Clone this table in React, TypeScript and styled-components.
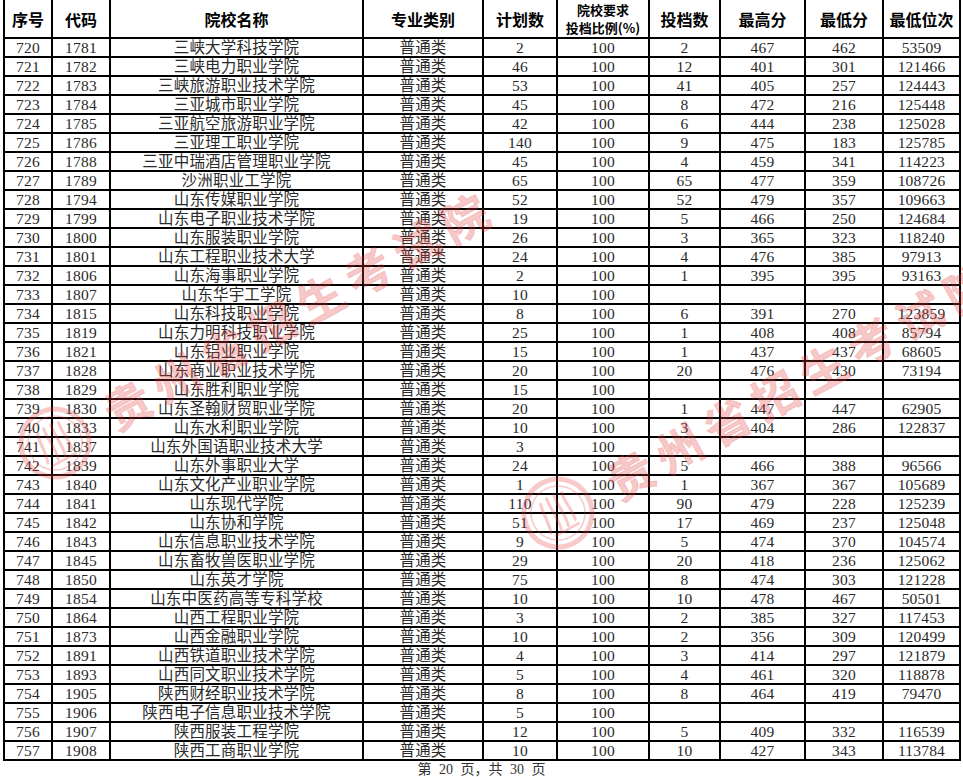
import styled, { createGlobalStyle } from "styled-components";

const GlobalStyle = createGlobalStyle`
  html, body {
    margin: 0;
    padding: 0;
    background: #fff;
  }
  body {
    width: 963px;
    height: 777px;
    overflow: hidden;
  }
`;

type Row = [string, string, string, string, string, string, string, string, string, string];

const COLS = "48px 58px 253px 120px 74px 92px 71px 85px 78px 77px";

const rows: Row[] = [
  ["720", "1781", "三峡大学科技学院", "普通类", "2", "100", "2", "467", "462", "53509"],
  ["721", "1782", "三峡电力职业学院", "普通类", "46", "100", "12", "401", "301", "121466"],
  ["722", "1783", "三峡旅游职业技术学院", "普通类", "53", "100", "41", "405", "257", "124443"],
  ["723", "1784", "三亚城市职业学院", "普通类", "45", "100", "8", "472", "216", "125448"],
  ["724", "1785", "三亚航空旅游职业学院", "普通类", "42", "100", "6", "444", "238", "125028"],
  ["725", "1786", "三亚理工职业学院", "普通类", "140", "100", "9", "475", "183", "125785"],
  ["726", "1788", "三亚中瑞酒店管理职业学院", "普通类", "45", "100", "4", "459", "341", "114223"],
  ["727", "1789", "沙洲职业工学院", "普通类", "65", "100", "65", "477", "359", "108726"],
  ["728", "1794", "山东传媒职业学院", "普通类", "52", "100", "52", "479", "357", "109663"],
  ["729", "1799", "山东电子职业技术学院", "普通类", "19", "100", "5", "466", "250", "124684"],
  ["730", "1800", "山东服装职业学院", "普通类", "26", "100", "3", "365", "323", "118240"],
  ["731", "1801", "山东工程职业技术大学", "普通类", "24", "100", "4", "476", "385", "97913"],
  ["732", "1806", "山东海事职业学院", "普通类", "2", "100", "1", "395", "395", "93163"],
  ["733", "1807", "山东华宇工学院", "普通类", "10", "100", "", "", "", ""],
  ["734", "1815", "山东科技职业学院", "普通类", "8", "100", "6", "391", "270", "123859"],
  ["735", "1819", "山东力明科技职业学院", "普通类", "25", "100", "1", "408", "408", "85794"],
  ["736", "1821", "山东铝业职业学院", "普通类", "15", "100", "1", "437", "437", "68605"],
  ["737", "1828", "山东商业职业技术学院", "普通类", "20", "100", "20", "476", "430", "73194"],
  ["738", "1829", "山东胜利职业学院", "普通类", "15", "100", "", "", "", ""],
  ["739", "1830", "山东圣翰财贸职业学院", "普通类", "20", "100", "1", "447", "447", "62905"],
  ["740", "1833", "山东水利职业学院", "普通类", "10", "100", "3", "404", "286", "122837"],
  ["741", "1837", "山东外国语职业技术大学", "普通类", "3", "100", "", "", "", ""],
  ["742", "1839", "山东外事职业大学", "普通类", "24", "100", "5", "466", "388", "96566"],
  ["743", "1840", "山东文化产业职业学院", "普通类", "1", "100", "1", "367", "367", "105689"],
  ["744", "1841", "山东现代学院", "普通类", "110", "100", "90", "479", "228", "125239"],
  ["745", "1842", "山东协和学院", "普通类", "51", "100", "17", "469", "237", "125048"],
  ["746", "1843", "山东信息职业技术学院", "普通类", "9", "100", "5", "474", "370", "104574"],
  ["747", "1845", "山东畜牧兽医职业学院", "普通类", "29", "100", "20", "418", "236", "125062"],
  ["748", "1850", "山东英才学院", "普通类", "75", "100", "8", "474", "303", "121228"],
  ["749", "1854", "山东中医药高等专科学校", "普通类", "10", "100", "10", "478", "467", "50501"],
  ["750", "1864", "山西工程职业学院", "普通类", "3", "100", "2", "385", "327", "117453"],
  ["751", "1873", "山西金融职业学院", "普通类", "10", "100", "2", "356", "309", "120499"],
  ["752", "1891", "山西铁道职业技术学院", "普通类", "4", "100", "3", "414", "297", "121879"],
  ["753", "1893", "山西同文职业技术学院", "普通类", "5", "100", "4", "461", "320", "118878"],
  ["754", "1905", "陕西财经职业技术学院", "普通类", "8", "100", "8", "464", "419", "79470"],
  ["755", "1906", "陕西电子信息职业技术学院", "普通类", "5", "100", "", "", "", ""],
  ["756", "1907", "陕西服装工程学院", "普通类", "12", "100", "5", "409", "332", "116539"],
  ["757", "1908", "陕西工商职业学院", "普通类", "10", "100", "10", "427", "343", "113784"],
];

export default function App() {
  return (
    <Page>
      <GlobalStyle />
      <Table>
        <HeadRow>
          <HeadCell>序号</HeadCell>
          <HeadCell>代码</HeadCell>
          <HeadCell>院校名称</HeadCell>
          <HeadCell>专业类别</HeadCell>
          <HeadCell>计划数</HeadCell>
          <HeadCell $small>
            <HeadLine>院校要求</HeadLine>
            <HeadLine>投档比例(%)</HeadLine>
          </HeadCell>
          <HeadCell>投档数</HeadCell>
          <HeadCell>最高分</HeadCell>
          <HeadCell>最低分</HeadCell>
          <HeadCell>最低位次</HeadCell>
        </HeadRow>
        {rows.map((r) => (
          <BodyRow key={r[0]}>
            {r.map((v, i) => (
              <Cell key={i}>{v}</Cell>
            ))}
          </BodyRow>
        ))}
      </Table>
      <Footer>第 20 页，共 30 页</Footer>

      <Watermark $x={17} $y={405}>
        <Seal />
        <MarkText>贵州省招生考试院</MarkText>
      </Watermark>
      <Watermark $x={520} $y={475}>
        <Seal />
        <MarkText>贵州省招生考试院</MarkText>
      </Watermark>
    </Page>
  );
}

function Seal() {
  return (
    <SealSvg viewBox="0 0 76 76">
      <circle cx="38" cy="38" r="34" fill="none" stroke="currentColor" strokeWidth="5" />
      <circle cx="38" cy="38" r="27" fill="none" stroke="currentColor" strokeWidth="1.5" />
      <path
        d="M27 22 C24 32 26 42 22 52 M35 20 C33 32 36 42 33 54 M43 20 C41 32 44 42 41 54 M51 22 C49 32 52 42 50 52"
        fill="none"
        stroke="currentColor"
        strokeWidth="3"
        strokeLinecap="round"
      />
      <path d="M24 57 L52 57" stroke="currentColor" strokeWidth="2.5" />
    </SealSvg>
  );
}

const Page = styled.div`
  position: relative;
  width: 963px;
  height: 777px;
  overflow: hidden;
`;

const Table = styled.div`
  margin: -2px 0 0 3px;
  width: 958px;
  border-left: 2px solid #000;
  border-top: 2px solid #000;
  box-sizing: border-box;
`;

const HeadRow = styled.div`
  display: grid;
  grid-template-columns: ${COLS};
  height: 39px;
`;

const BodyRow = styled.div`
  display: grid;
  grid-template-columns: ${COLS};
  height: 19px;
`;

const HeadCell = styled.div<{ $small?: boolean }>`
  box-sizing: border-box;
  border-right: 2px solid #000;
  border-bottom: 2px solid #000;
  display: flex;
  flex-direction: column;
  align-items: center;
  justify-content: center;
  text-align: center;
  font-family: "Noto Sans CJK SC", "Noto Sans", sans-serif;
  font-weight: 700;
  font-size: ${(p) => (p.$small ? "13px" : "16px")};
  line-height: ${(p) => (p.$small ? "18px" : "20px")};
  color: #000;
  white-space: nowrap;
`;

const HeadLine = styled.span`
  display: block;
`;

const Cell = styled.div`
  box-sizing: border-box;
  border-right: 2px solid #000;
  border-bottom: 2px solid #000;
  text-align: center;
  font-family: "Liberation Serif", "Noto Sans CJK SC", serif;
  font-size: 15.5px;
  line-height: 18px;
  letter-spacing: 0.2px;
  color: #2a2a2a;
  white-space: nowrap;
  overflow: hidden;
`;

const Footer = styled.div`
  width: 963px;
  margin-top: 1px;
  text-align: center;
  font-family: "Liberation Serif", "Noto Sans CJK SC", serif;
  font-size: 14px;
  line-height: 16px;
  word-spacing: 4px;
  color: #333;
`;

const Watermark = styled.div<{ $x: number; $y: number }>`
  position: absolute;
  left: ${(p) => p.$x}px;
  top: ${(p) => p.$y}px;
  height: 76px;
  display: flex;
  align-items: center;
  gap: 21px;
  transform-origin: 38px 50%;
  transform: rotate(-29deg);
  color: rgba(226, 60, 60, 0.28);
  pointer-events: none;
  white-space: nowrap;
`;

const SealSvg = styled.svg`
  width: 76px;
  height: 76px;
  flex: none;
`;

const MarkText = styled.span`
  font-family: "Noto Sans CJK SC", sans-serif;
  font-weight: 700;
  font-size: 46px;
  line-height: 50px;
  letter-spacing: 9px;
  -webkit-text-stroke: 1px rgba(226, 60, 60, 0.2);
`;
